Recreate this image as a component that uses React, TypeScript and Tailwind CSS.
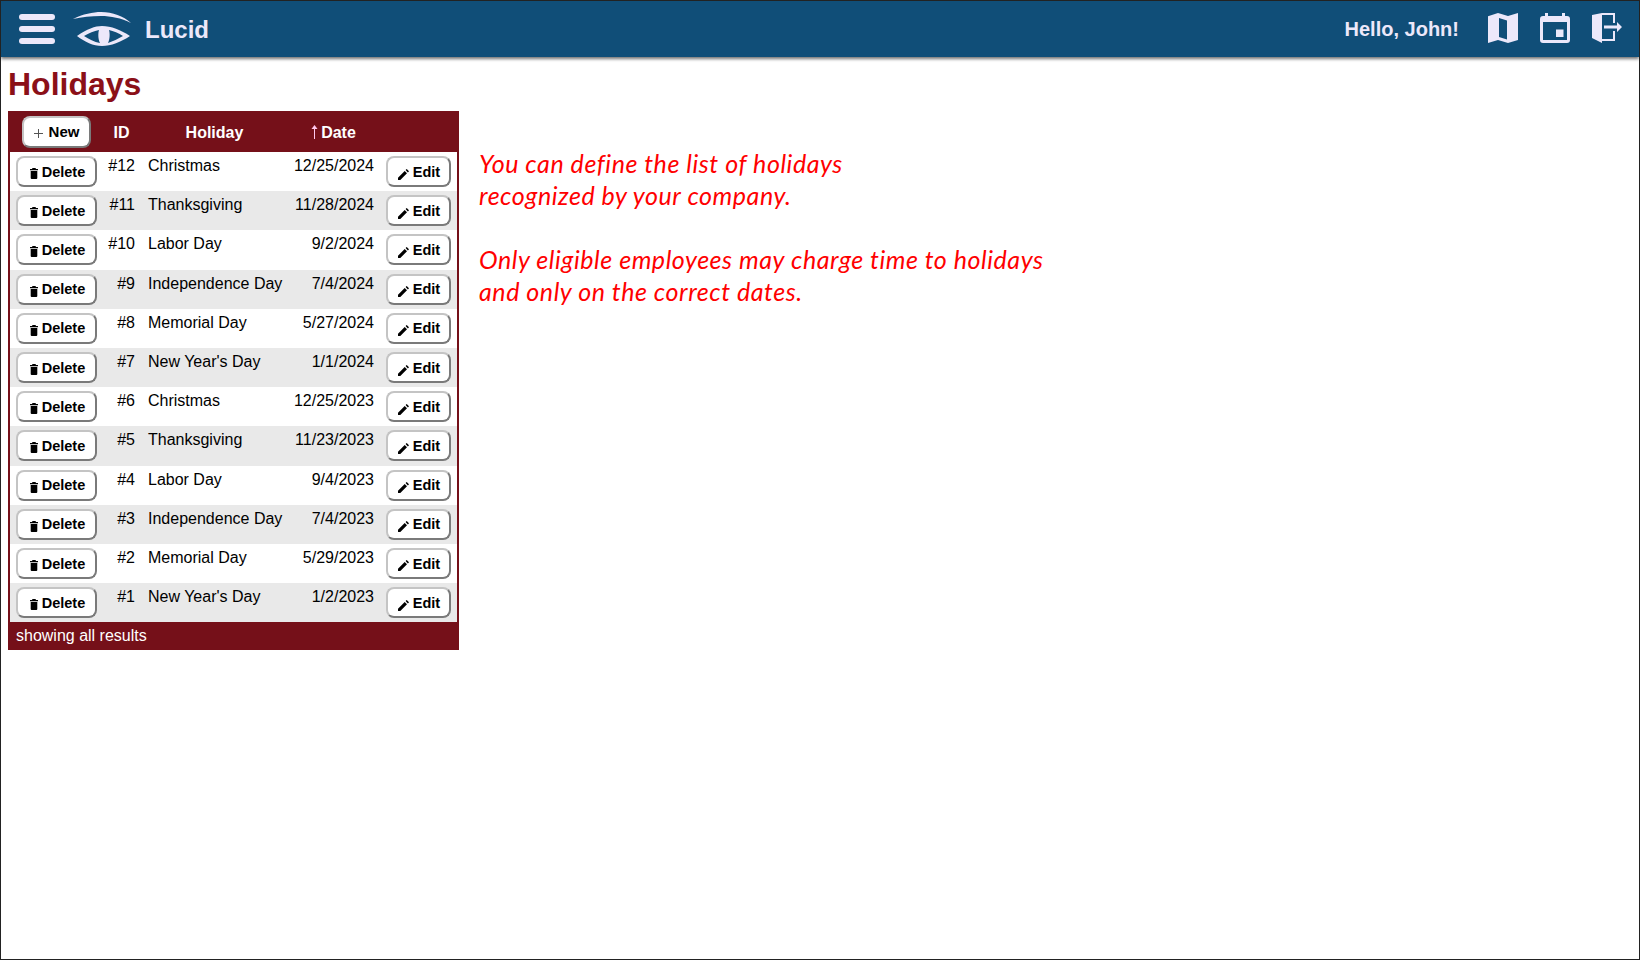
type Holiday = { id: number; name: string; date: string };

const holidays: Holiday[] = [
  { id: 12, name: "Christmas", date: "12/25/2024" },
  { id: 11, name: "Thanksgiving", date: "11/28/2024" },
  { id: 10, name: "Labor Day", date: "9/2/2024" },
  { id: 9, name: "Independence Day", date: "7/4/2024" },
  { id: 8, name: "Memorial Day", date: "5/27/2024" },
  { id: 7, name: "New Year's Day", date: "1/1/2024" },
  { id: 6, name: "Christmas", date: "12/25/2023" },
  { id: 5, name: "Thanksgiving", date: "11/23/2023" },
  { id: 4, name: "Labor Day", date: "9/4/2023" },
  { id: 3, name: "Independence Day", date: "7/4/2023" },
  { id: 2, name: "Memorial Day", date: "5/29/2023" },
  { id: 1, name: "New Year's Day", date: "1/2/2023" },
];

const btn =
  "inline-flex items-center justify-center rounded-lg border-2 border-t-[#c4c4c4] border-l-[#c4c4c4] border-r-[#7a7a7a] border-b-[#7a7a7a] bg-white font-bold text-black";

function Logo() {
  return (
    <svg width="58" height="34" viewBox="0 0 58 34" fill="#ece8fa">
      <path d="M0 7C10 2 20 0 28 0C40 0 50 4 58 11C48 6 38 4 28 4C18 4 9 5 0 7z" />
      <path
        fillRule="evenodd"
        d="M4 24C14 17 22 14 29 14C38 14 48 18 57 24C48 30 38 34 29 34C20 34 12 30 4 24zM11 24C16 27 21 30 27 31C25 27 25 21 26 18C21 19 16 21 11 24zM36 18C37 21 37 27 35 31C40 29 45 27 50 24C46 21 40 19 36 18z"
      />
    </svg>
  );
}

function MapIcon() {
  return (
    <svg width="30" height="30" viewBox="0 0 30 30" fill="#ece8fa">
      <path
        fillRule="evenodd"
        d="M0 3.300L10 0L20 3L30 0V27L20 30L10 27L0 30zM11 5V24L19 26.500V7.500z"
      />
    </svg>
  );
}

function CalendarIcon() {
  return (
    <svg width="30" height="30" viewBox="0 0 30 30" fill="#ece8fa">
      <path
        fillRule="evenodd"
        d="M5 0H8V3H22V0H25V3H27A3 3 0 0 1 30 6V27A3 3 0 0 1 27 30H3A3 3 0 0 1 0 27V6A3 3 0 0 1 3 3H5zM3 9V27H27V9zM16 16.500H23.500V24H16z"
      />
    </svg>
  );
}

function ExitIcon() {
  return (
    <svg width="30" height="30" viewBox="0 0 30 30" fill="#ece8fa">
      <path d="M0 2L10 0V30L0 25z" />
      <path d="M10 0H23V10H21V2H10z" />
      <path d="M10 26H21V18H23V28H10z" />
      <path d="M12 12.500H25V9L30 14L25 19V15.500H12z" />
    </svg>
  );
}

function TrashIcon() {
  return (
    <svg width="8" height="11" viewBox="0 0 8 11" fill="#000" className="mr-[4px] mt-[2px]">
      <path d="M2.500 0H5.500L6 1H8V2.200H0V1H2zM.7 3H7.300V10A1 1 0 0 1 6.300 11H1.700A1 1 0 0 1 .7 10z" />
    </svg>
  );
}

function PencilIcon() {
  return (
    <svg width="11" height="11" viewBox="0 0 11 11" fill="#000" className="mr-[4px] mt-[3px]">
      <path d="M0 11V8.700L6.700 2L9 4.300L2.300 11zM7.600 1.100L8.700 0L11 2.300L9.900 3.400z" />
    </svg>
  );
}

function PlusIcon() {
  return (
    <svg width="9" height="9" viewBox="0 0 9 9" fill="#555" className="mr-[6px] mt-[1px]">
      <path d="M4 0H5V4H9V5H5V9H4V5H0V4H4z" />
    </svg>
  );
}

function SortArrow() {
  return (
    <svg width="7" height="14" viewBox="0 0 7 14" fill="#ffc8ec" className="mr-[3px] mt-[4px] inline-block align-top">
      <path d="M3 3H4V14H3z" />
      <path d="M3.500 0L6.500 4H.5z" />
    </svg>
  );
}

export default function App() {
  return (
    <div className="h-[960px] w-[1640px] overflow-hidden border border-[#222] bg-white font-['Liberation_Sans',Arial,sans-serif] text-black">
      {/* barra superior */}
      <header className="flex h-[56px] items-center justify-between bg-[#104e78] shadow-[0_2px_3px_rgba(0,0,0,0.55)]">
        <div className="flex items-center">
          <div className="ml-[18px] flex w-[36px] flex-col gap-[6px]">
            <span className="h-[6px] rounded-full bg-[#ece8fa]" />
            <span className="h-[6px] rounded-full bg-[#ece8fa]" />
            <span className="h-[6px] rounded-full bg-[#ece8fa]" />
          </div>
          <div className="ml-[18px]">
            <Logo />
          </div>
          <span className="ml-[14px] pt-[2px] text-[24px] font-bold text-[#ece8fa]">Lucid</span>
        </div>
        <div className="flex items-center">
          <span className="text-[20px] font-bold text-[#ece8fa]">Hello, John!</span>
          <div className="ml-[29px] flex items-center gap-[22px] mr-[17px] mb-[2px]">
            <MapIcon />
            <CalendarIcon />
            <ExitIcon />
          </div>
        </div>
      </header>

      <main className="px-[7px]">
        <h1 className="mt-[9px] text-[32px] font-bold leading-[37px] text-[#8b1018]">Holidays</h1>

        <div className="mt-[8px] flex items-start">
          <div className="w-[451px] bg-[#751019] px-[2px]">
            <table className="w-full table-fixed border-collapse text-[16px]">
              <colgroup>
                <col className="w-[89px]" />
                <col className="w-[38px]" />
                <col className="w-[155px]" />
                <col className="w-[83px]" />
                <col />
              </colgroup>
              <thead>
                <tr className="h-[41px] text-white">
                  <th className="text-center">
                    <button className={btn + " ml-[4px] h-[32px] w-[69px] pt-[2px] text-[15px]"}>
                      <PlusIcon />
                      New
                    </button>
                  </th>
                  <th className="pl-[7px] pt-[2px] text-center font-bold">ID</th>
                  <th className="pt-[2px] text-center font-bold">Holiday</th>
                  <th className="pt-[2px] text-center font-bold whitespace-nowrap">
                    <SortArrow />
                    Date
                  </th>
                  <th />
                </tr>
              </thead>
              <tbody>
                {holidays.map((h, i) => (
                  <tr key={h.id} className={i % 2 === 0 ? "h-[39.2px] bg-white" : "h-[39.2px] bg-[#e9e9e9]"}>
                    <td className="pl-[6px] align-middle">
                      <button className={btn + " h-[31px] w-[81px] pl-[2px] pt-[2px] text-[14.5px]"}>
                        <TrashIcon />
                        Delete
                      </button>
                    </td>
                    <td className="pt-[2px] pr-[2px] text-right align-top">#{h.id}</td>
                    <td className="pt-[2px] pl-[11px] align-top whitespace-nowrap">{h.name}</td>
                    <td className="pt-[2px] pr-[1px] text-right align-top">{h.date}</td>
                    <td className="pl-[11px] align-middle">
                      <button className={btn + " h-[31px] w-[65px] pl-[1px] pt-[2px] text-[14.5px]"}>
                        <PencilIcon />
                        Edit
                      </button>
                    </td>
                  </tr>
                ))}
              </tbody>
            </table>
            <div className="flex h-[28px] items-center px-[6px] text-[16px] text-white">showing all results</div>
          </div>

          <div className="ml-[20px] mt-[36px] font-['Lato',sans-serif] text-[25px] italic leading-[32px] tracking-[0.55px] text-[#ff0000]">
            <p>You can define the list of holidays</p>
            <p>recognized by your company.</p>
            <p className="mt-[32px]">Only eligible employees may charge time to holidays</p>
            <p>and only on the correct dates.</p>
          </div>
        </div>
      </main>
    </div>
  );
}
